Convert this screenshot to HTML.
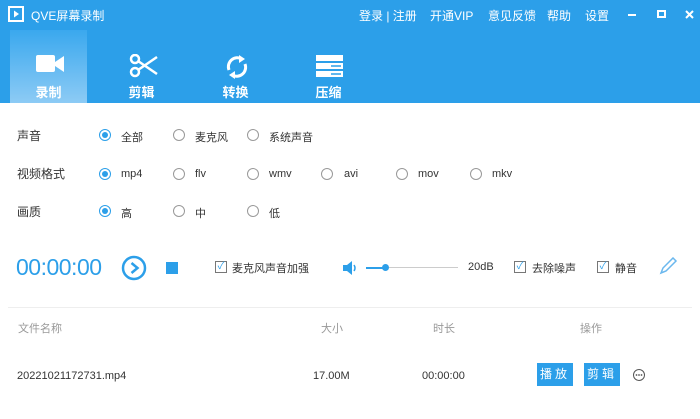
<html><head><style>
*{margin:0;padding:0;box-sizing:border-box}
body{width:700px;height:419px;background:#fff;font-family:"Liberation Sans","Noto Sans CJK SC",sans-serif;position:relative;overflow:hidden;font-size:12px;color:#333}
.hd{position:absolute;left:0;top:0;width:700px;height:103px;background:#2c9fe9}
.a{position:absolute;white-space:nowrap}
.w{color:#fff}
.tab{position:absolute;top:30px;width:77px;height:73px;text-align:center;color:#fff;font-size:13px;font-weight:bold}
.tab svg{position:absolute;left:26px;top:24px}
.tab span{position:absolute;left:0;right:0;top:52px}
.r{position:absolute;width:12px;height:12px;border:1px solid #999;border-radius:50%}
.r.on{border-color:#2c9fe9}
.r.on:after{content:"";position:absolute;left:2px;top:2px;width:6px;height:6px;border-radius:50%;background:#2c9fe9}
.cb{position:absolute;width:12px;height:12px;border:1px solid #777;font-size:10px;line-height:10px;color:#2c9fe9;text-align:center}
.btn{position:absolute;top:363px;width:36px;height:23px;background:#2c9fe9;color:#fff;font-size:12px;text-align:center;line-height:23px;letter-spacing:3px}
</style></head><body>
<div class="hd"></div>
<svg class="a" style="left:8px;top:6px" width="16" height="16"><rect x="1" y="1" width="14" height="14" fill="none" stroke="#fff" stroke-width="2"/><path d="M6 4.5L11 8L6 11.5Z" fill="#fff"/></svg>
<div class="a w" style="left:31px;top:7px;font-size:12px">QVE屏幕录制</div>
<div class="a w" style="left:359px;top:7px;font-size:12px">登录 | 注册</div>
<div class="a w" style="left:430px;top:7px;font-size:12px">开通VIP</div>
<div class="a w" style="left:488px;top:7px;font-size:12px">意见反馈</div>
<div class="a w" style="left:547px;top:7px;font-size:12px">帮助</div>
<div class="a w" style="left:585px;top:7px;font-size:12px">设置</div>
<div class="a" style="left:628px;top:14px;width:8px;height:2px;background:#fff"></div>
<div class="a" style="left:657px;top:10px;width:9px;height:8px;border:2px solid #fff"></div>
<svg class="a" style="left:685px;top:10px" width="9" height="9"><path d="M1 1L8 8M8 1L1 8" stroke="#fff" stroke-width="2"/></svg>
<div class="tab" style="left:10px;background:linear-gradient(#3aa8ee,#8dcbf5)"><svg width="28" height="20"><rect x="0" y="1" width="19" height="17" rx="2" fill="#fff"/><path d="M19 8L28 2V18L19 12Z" fill="#fff"/></svg><span>录制</span></div>
<div class="tab" style="left:103px"><svg width="30" height="24"><circle cx="6" cy="5" r="4" fill="none" stroke="#fff" stroke-width="2.5"/><circle cx="6" cy="18" r="4" fill="none" stroke="#fff" stroke-width="2.5"/><path d="M9 7L28 20M9 16L28 3" stroke="#fff" stroke-width="2.5"/></svg><span>剪辑</span></div>
<div class="tab" style="left:197px"><svg width="28" height="26" viewBox="0 0 28 26"><path d="M6 16A9 9 0 0 1 19 5" fill="none" stroke="#fff" stroke-width="3"/><path d="M16 1L22 5L16 9Z" fill="#fff"/><path d="M22 10A9 9 0 0 1 9 21" fill="none" stroke="#fff" stroke-width="3"/><path d="M12 17L6 21L12 25Z" fill="#fff"/></svg><span>转换</span></div>
<div class="tab" style="left:290px"><svg width="28" height="24"><rect x="0" y="1" width="27" height="6" fill="#fff"/><rect x="0" y="9" width="27" height="6" fill="#fff"/><rect x="0" y="17" width="27" height="6" fill="#fff"/><path d="M15 12H25M15 20H25" stroke="#2c9fe9" stroke-width="1.5"/></svg><span>压缩</span></div>

<div class="a" style="left:17px;top:127px">声音</div>
<div class="a" style="left:17px;top:165px">视频格式</div>
<div class="a" style="left:17px;top:203px">画质</div>

<div class="r on" style="left:99px;top:129px"></div><div class="a" style="left:121px;top:129px;font-size:11px">全部</div>
<div class="r" style="left:173px;top:129px"></div><div class="a" style="left:195px;top:129px;font-size:11px">麦克风</div>
<div class="r" style="left:247px;top:129px"></div><div class="a" style="left:269px;top:129px;font-size:11px">系统声音</div>

<div class="r on" style="left:99px;top:168px"></div><div class="a" style="left:121px;top:168px;font-size:11px">mp4</div>
<div class="r" style="left:173px;top:168px"></div><div class="a" style="left:195px;top:168px;font-size:11px">flv</div>
<div class="r" style="left:247px;top:168px"></div><div class="a" style="left:269px;top:168px;font-size:11px">wmv</div>
<div class="r" style="left:321px;top:168px"></div><div class="a" style="left:344px;top:168px;font-size:11px">avi</div>
<div class="r" style="left:396px;top:168px"></div><div class="a" style="left:418px;top:168px;font-size:11px">mov</div>
<div class="r" style="left:470px;top:168px"></div><div class="a" style="left:492px;top:168px;font-size:11px">mkv</div>

<div class="r on" style="left:99px;top:205px"></div><div class="a" style="left:121px;top:205px;font-size:11px">高</div>
<div class="r" style="left:173px;top:205px"></div><div class="a" style="left:195px;top:205px;font-size:11px">中</div>
<div class="r" style="left:247px;top:205px"></div><div class="a" style="left:269px;top:205px;font-size:11px">低</div>

<div class="a" style="left:16px;top:254px;font-size:23px;color:#2c9fe9;letter-spacing:-0.5px">00:00:00</div>
<svg class="a" style="left:121px;top:255px" width="26" height="26"><circle cx="13" cy="13" r="11" fill="none" stroke="#2c9fe9" stroke-width="2.5"/><path d="M10.5 8L16.5 13L10.5 18" fill="none" stroke="#2c9fe9" stroke-width="2.5"/></svg>
<div class="a" style="left:166px;top:262px;width:12px;height:12px;background:#2c9fe9"></div>
<div class="cb" style="left:215px;top:261px">✓</div><div class="a" style="left:232px;top:260px;font-size:11px">麦克风声音加强</div>
<svg class="a" style="left:343px;top:260px" width="14" height="16"><path d="M0 5H4L9 1V15L4 11H0Z" fill="#2c9fe9"/><path d="M11 5Q13 8 11 11" stroke="#2c9fe9" stroke-width="1.5" fill="none"/></svg>
<div class="a" style="left:366px;top:267px;width:20px;height:2px;background:#2c9fe9"></div>
<div class="a" style="left:386px;top:267px;width:72px;height:1px;background:#ccc"></div>
<div class="a" style="left:382px;top:264px;width:7px;height:7px;border-radius:50%;background:#2c9fe9"></div>
<div class="a" style="left:468px;top:261px;font-size:11px">20dB</div>
<div class="cb" style="left:514px;top:261px">✓</div><div class="a" style="left:532px;top:260px;font-size:11px">去除噪声</div>
<div class="cb" style="left:597px;top:261px">✓</div><div class="a" style="left:615px;top:260px;font-size:11px">静音</div>
<svg class="a" style="left:659px;top:257px" width="20" height="18"><path d="M2 16L4 11L14 1L17 4L7 14Z" fill="none" stroke="#6bb8ee" stroke-width="1.5"/></svg>

<div class="a" style="left:8px;top:307px;width:684px;height:1px;background:#eee"></div>
<div class="a" style="left:18px;top:320px;color:#999;font-size:11px">文件名称</div>
<div class="a" style="left:321px;top:320px;color:#999;font-size:11px">大小</div>
<div class="a" style="left:433px;top:320px;color:#999;font-size:11px">时长</div>
<div class="a" style="left:580px;top:320px;color:#999;font-size:11px">操作</div>
<div class="a" style="left:17px;top:370px;font-size:11px">20221021172731.mp4</div>
<div class="a" style="left:313px;top:370px;font-size:11px">17.00M</div>
<div class="a" style="left:422px;top:370px;font-size:11px">00:00:00</div>
<div class="btn" style="left:537px">播放</div>
<div class="btn" style="left:584px">剪辑</div>
<svg class="a" style="left:632px;top:368px" width="14" height="14"><circle cx="7" cy="7" r="5.5" fill="none" stroke="#555"/><circle cx="4.5" cy="7" r="0.9" fill="#555"/><circle cx="7" cy="7" r="0.9" fill="#555"/><circle cx="9.5" cy="7" r="0.9" fill="#555"/></svg>
</body></html>
